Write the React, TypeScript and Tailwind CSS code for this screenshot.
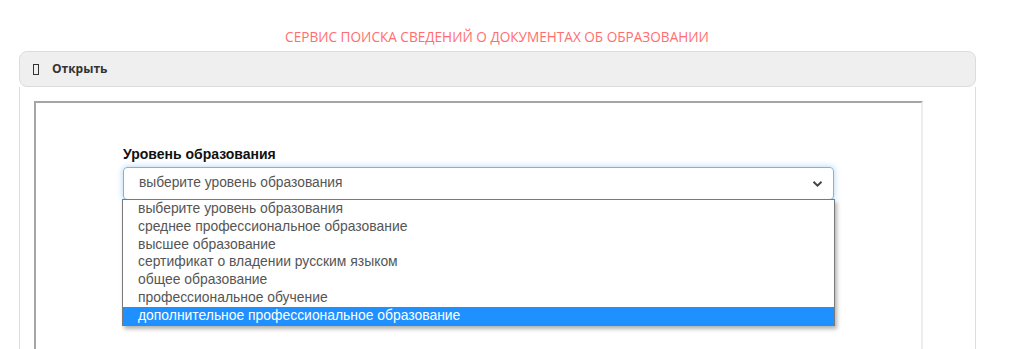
import React from "react";

const options = [
  "выберите уровень образования",
  "среднее профессиональное образование",
  "высшее образование",
  "сертификат о владении русским языком",
  "общее образование",
  "профессиональное обучение",
  "дополнительное профессиональное образование",
];

export default function App() {
  return (
    <div className="w-[1024px] h-[349px] overflow-hidden bg-white font-['Open_Sans',sans-serif]">
      <div className="pt-[29px] h-[51px] w-[994px] text-center text-[13.6px] leading-[16px] text-[#ff6e6e]">
        СЕРВИС ПОИСКА СВЕДЕНИЙ О ДОКУМЕНТАХ ОБ ОБРАЗОВАНИИ
      </div>
      <div className="ml-[19px] w-[957px]">
        <div className="h-[36px] bg-[#efefef] border border-[#dcdcdc] rounded-[8px] flex items-center pl-[13px] gap-[13px]">
          <span className="inline-block w-[6px] h-[11px] border border-[#333]" />
          <span className="text-[12px] font-bold text-[#333]">Открыть</span>
        </div>
        <div className="h-[300px] border-l border-r border-[#dddddd] pl-[14px] pt-[14px]">
          <div className="w-[889px] h-[300px] border-t-2 border-l-2 border-[#a5a5a5] border-r-2 border-r-[#ececec] pl-[87px] pt-[41px] font-['Liberation_Sans',Arial,sans-serif]">
            <div className="text-[14px] font-bold leading-[20px] text-[#111] mb-[3px]">Уровень образования</div>
            <div className="relative w-[711px]">
              <div className="h-[33px] border border-[#75b5eb] rounded-[4px] shadow-[0_0_6px_rgba(102,175,233,0.55)] flex items-center pl-[15px] pr-[10px] text-[13.8px] text-[#555]">
                <span className="flex-1">выберите уровень образования</span>
                <svg width="11" height="8" viewBox="0 0 11 8" className="mt-[1px]">
                  <path d="M1.5 1.8 L5.5 5.6 L9.5 1.8" fill="none" stroke="#444" strokeWidth="2" />
                </svg>
              </div>
              <div className="absolute left-[-1px] top-[32px] w-[713px] bg-white border border-[#7a7a7a] shadow-[2px_3px_4px_rgba(0,0,0,0.3)] z-10">
                {options.map((o, i) => (
                  <div
                    key={o}
                    className={
                      i === options.length - 1
                        ? "h-[17.8px] leading-[17.8px] pl-[15px] text-[13.9px] bg-[#1e90ff] text-white"
                        : "h-[17.8px] leading-[17.8px] pl-[15px] text-[13.9px] text-[#555]"
                    }
                  >
                    {o}
                  </div>
                ))}
              </div>
            </div>
          </div>
        </div>
      </div>
    </div>
  );
}
